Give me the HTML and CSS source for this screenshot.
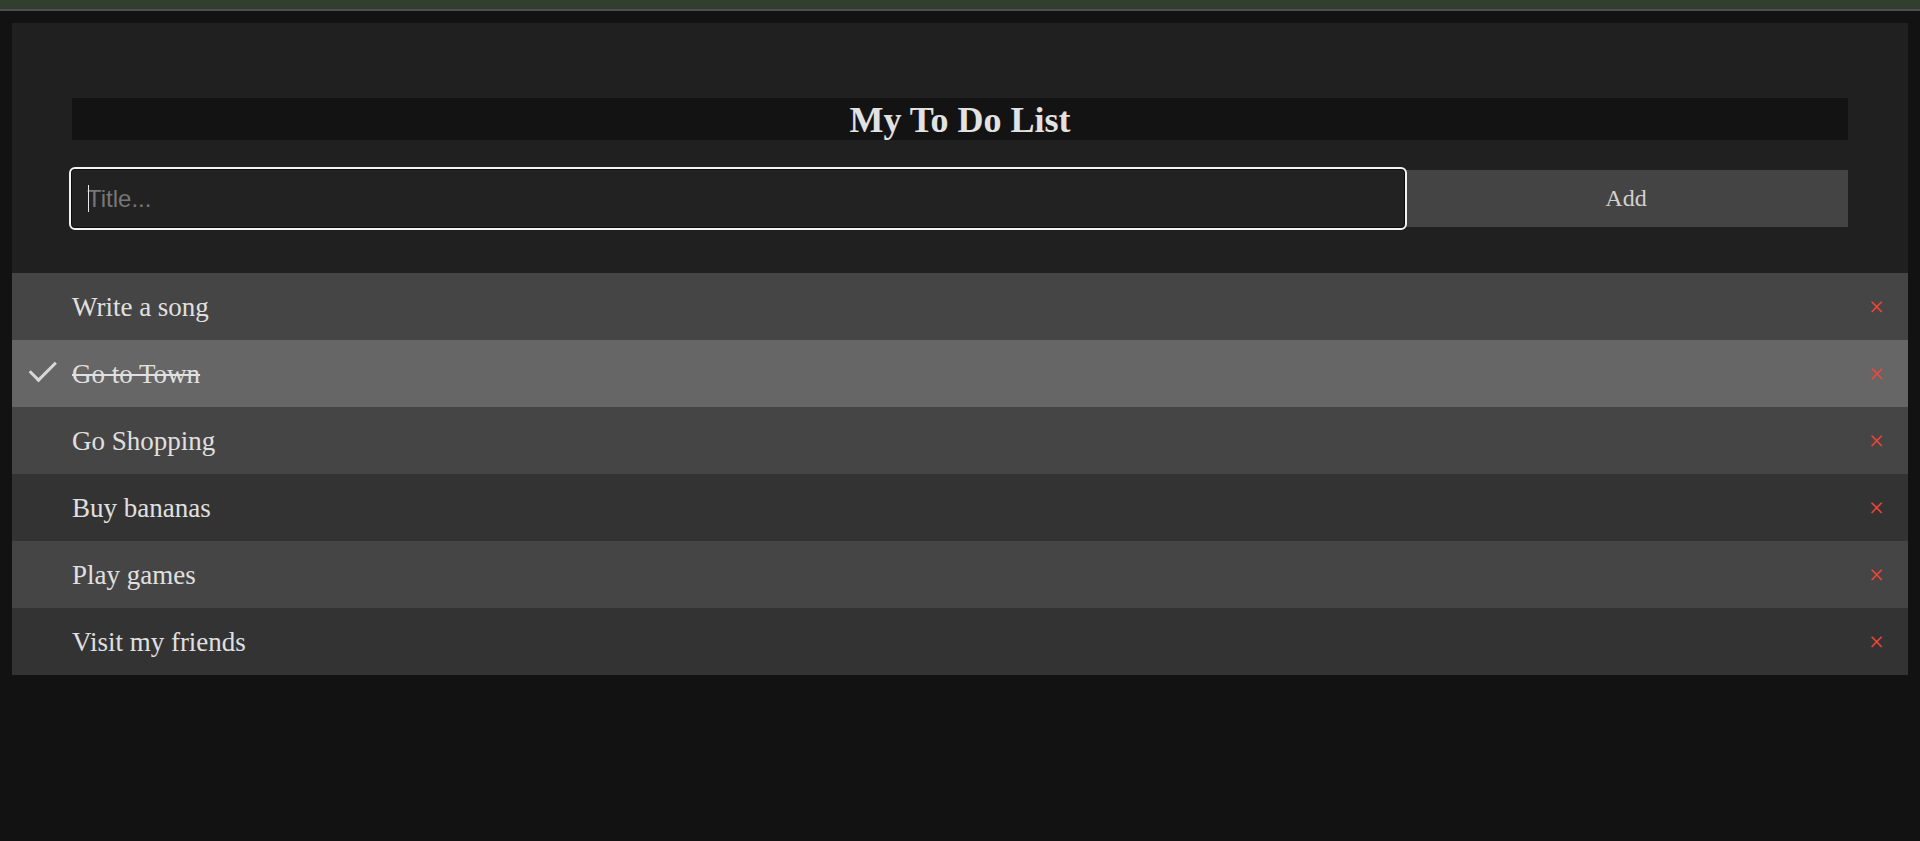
FILE: index.html
```html
<!DOCTYPE html>
<html lang="en">
<head>
<meta charset="utf-8">
<title>My To Do List</title>
<link rel="stylesheet" href="styles.css">
</head>
<body>
<div class="topbar"></div>
<div class="page">
  <div class="header">
    <h2 class="title">My To Do List</h2>
    <div class="add-row">
      <div class="input-wrap">
        <input class="title-input" type="text" placeholder="Title...">
        <span class="caret"></span>
      </div>
      <span class="add-btn">Add</span>
    </div>
  </div>
  <ul class="todo-list">
    <li class="item"><span class="item-text">Write a song</span><span class="close">&#215;</span></li>
    <li class="item checked"><span class="item-text">Go to Town</span><span class="close">&#215;</span></li>
    <li class="item"><span class="item-text">Go Shopping</span><span class="close">&#215;</span></li>
    <li class="item"><span class="item-text">Buy bananas</span><span class="close">&#215;</span></li>
    <li class="item"><span class="item-text">Play games</span><span class="close">&#215;</span></li>
    <li class="item"><span class="item-text">Visit my friends</span><span class="close">&#215;</span></li>
  </ul>
</div>
</body>
</html>
```
FILE: styles.css
```css
html, body {
  margin: 0;
  padding: 0;
  background: #121212;
}
body {
  font-family: "Liberation Serif", "Times New Roman", serif;
  color: #dedede;
  height: 841px;
  overflow: hidden;
}
.topbar {
  height: 9px;
  background: #323f2e;
  border-bottom: 2px solid #4e4e4e;
}
.page {
  padding: 12px;
}
.header {
  background: #202020;
  padding: 75px 60px 46px;
}
.title {
  margin: 0 0 30px;
  height: 41px;
  padding-top: 1px;
  line-height: 42px;
  font-size: 36px;
  font-weight: bold;
  text-align: center;
  background: #131313;
  color: #e2e2e2;
}
.add-row {
  display: grid;
  grid-template-columns: 3fr 1fr;
  height: 57px;
}
.input-wrap {
  position: relative;
}
.title-input {
  box-sizing: border-box;
  display: block;
  width: 100%;
  height: 57px;
  margin: 0;
  border: none;
  border-radius: 3px;
  padding: 0 15px;
  font-family: "Liberation Sans", Arial, sans-serif;
  font-size: 24px;
  background: #222222;
  color: #dddddd;
  outline: 2px solid #f2f2f2;
  outline-offset: 1px;
  box-shadow: 0 0 0 1px #0c0c0c;
  position: relative;
  z-index: 1;
}
.title-input::placeholder {
  color: #767676;
}
.caret {
  position: absolute;
  left: 16px;
  top: 15px;
  width: 1px;
  height: 27px;
  background: #e8e8e8;
  z-index: 2;
}
.add-btn {
  display: flex;
  align-items: center;
  justify-content: center;
  background: #444444;
  color: #d0d0d0;
  font-size: 24px;
}
.todo-list {
  margin: 0;
  padding: 0;
  list-style: none;
}
.item {
  position: relative;
  display: flex;
  justify-content: space-between;
  align-items: flex-start;
  padding: 19px 0 17px 60px;
  line-height: 31px;
  font-size: 27px;
  background: #333333;
  color: #e0e0e0;
}
.item:nth-child(odd) {
  background: #454545;
}
.item.checked {
  background: #666666;
}
.item.checked .item-text {
  text-decoration: line-through;
}
.item.checked::before {
  content: "";
  position: absolute;
  top: 15px;
  left: 24px;
  width: 10.5px;
  height: 22.5px;
  border-style: solid;
  border-color: #d8d8d8;
  border-width: 0 3px 3px 0;
  transform: rotate(45deg);
}
.close {
  padding: 0 24px;
  color: #f44336;
}
```
